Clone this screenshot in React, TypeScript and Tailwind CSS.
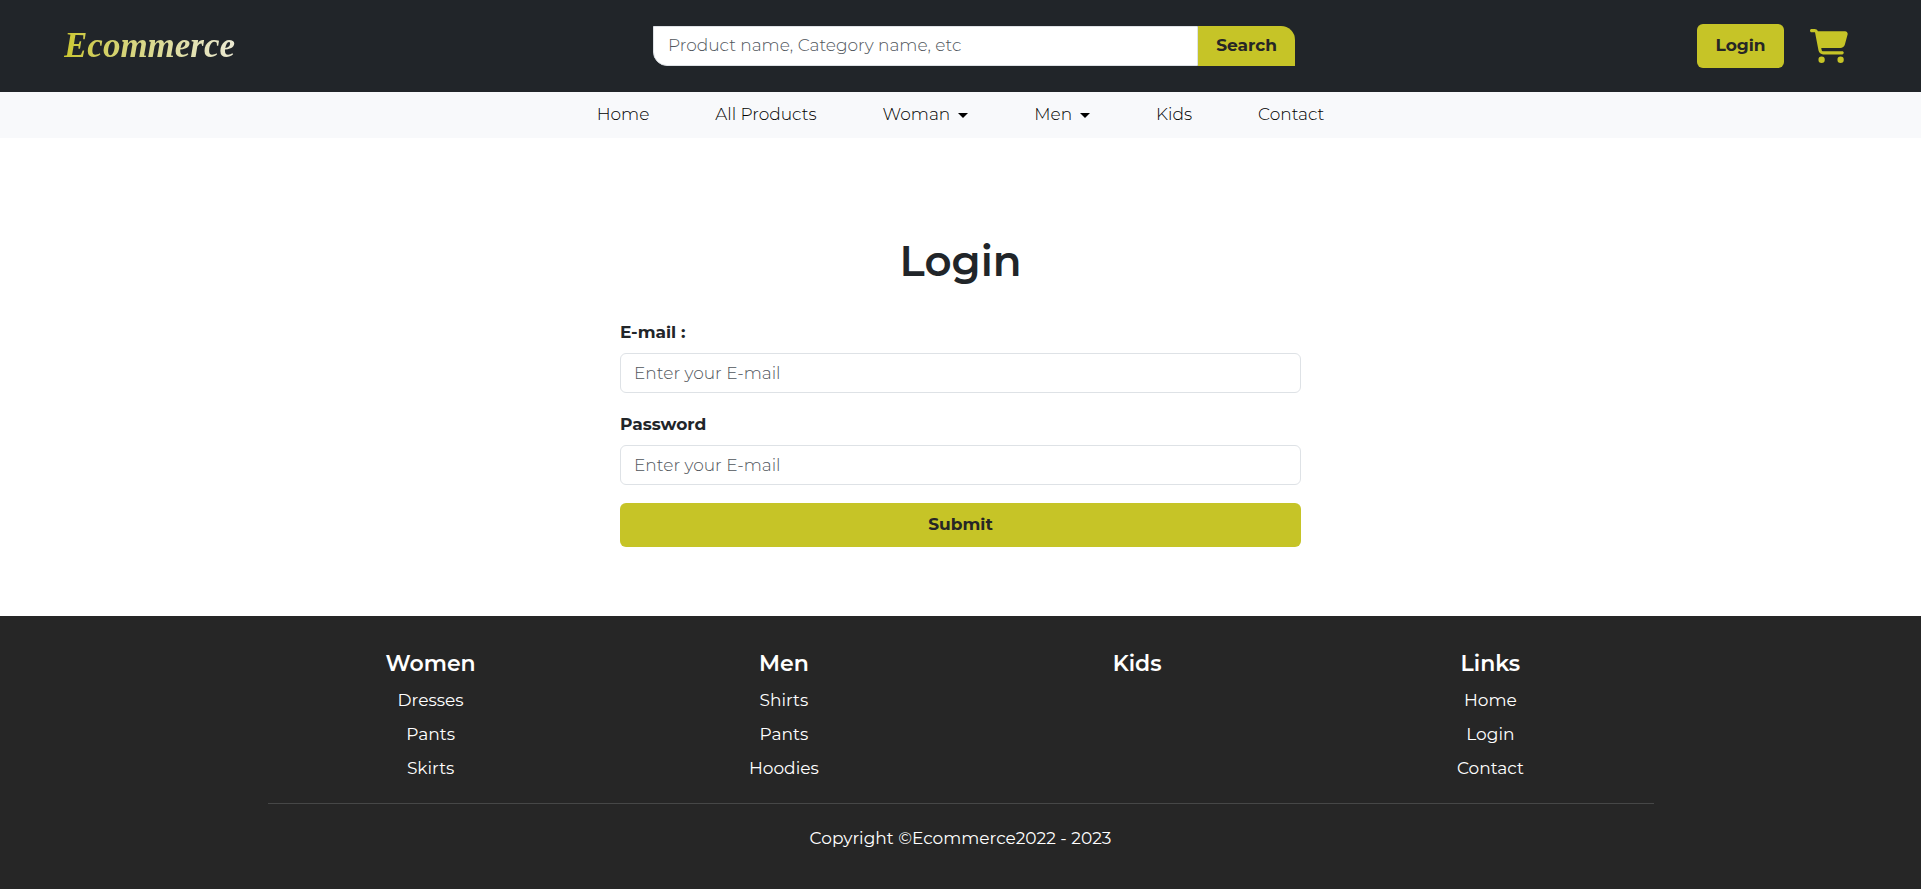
import { FaCartShopping } from "react-icons/fa6";

const navItems = [
  { label: "Home" },
  { label: "All Products" },
  { label: "Woman", menu: true },
  { label: "Men", menu: true },
  { label: "Kids" },
  { label: "Contact" },
];

const footerColumns = [
  { title: "Women", links: ["Dresses", "Pants", "Skirts"] },
  { title: "Men", links: ["Shirts", "Pants", "Hoodies"] },
  { title: "Kids", links: [] },
  { title: "Links", links: ["Home", "Login", "Contact"] },
];

function Header() {
  return (
    <header className="flex h-[92px] items-center justify-between bg-[#212529] pl-16 pr-[73px]">
      <a
        href="#"
        className="mr-4 bg-gradient-to-r from-[#cbc72e] to-[#ebe9d2] bg-clip-text font-['Brush_Script_MT','Liberation_Serif',serif] text-[35px] font-bold italic leading-[44px] text-transparent"
      >
        Ecommerce
      </a>
      <form role="search" className="flex h-10 w-full max-w-[642px]">
        <input
          type="search"
          aria-label="Search products"
          placeholder="Product name, Category name, etc"
          className="min-w-0 flex-1 rounded-bl-[14px] border border-[#dee2e6] bg-white px-3.5 text-[17px] font-light text-[#212529] placeholder:text-[#50565c]"
        />
        <button type="button" className="w-[97px] rounded-tr-[14px] bg-[#c6c427] text-[17px] font-bold text-[#262626]">
          Search
        </button>
      </form>
      <div className="flex items-center gap-[26px]">
        <button type="button" className="h-11 w-[87px] rounded-md bg-[#c6c427] text-[17px] font-bold text-[#262626]">
          Login
        </button>
        <a href="#" aria-label="Cart" className="text-[#c6c427]">
          <FaCartShopping size={38} />
        </a>
      </div>
    </header>
  );
}

function Nav() {
  return (
    <nav className="flex h-[46px] items-center justify-center gap-[66px] bg-[#f8f9fb] text-[17px] font-light text-black">
      {navItems.map((item) => (
        <a key={item.label} href="#" className="flex items-center gap-2">
          {item.label}
          {item.menu && (
            <span className="border-x-[5px] border-t-[5px] border-x-transparent border-t-black" />
          )}
        </a>
      ))}
    </nav>
  );
}

function Field({ id, label, type }: { id: string; label: string; type: string }) {
  return (
    <div className="mb-[18px]">
      <label htmlFor={id} className="mb-2 block text-[17px] font-bold leading-[26px]">
        {label}
      </label>
      <input
        id={id}
        type={type}
        placeholder="Enter your E-mail"
        className="block h-10 w-full rounded-md border border-[#dee2e6] px-[13px] text-[17px] font-light placeholder:text-[#50565c]"
      />
    </div>
  );
}

export default function App() {
  return (
    <div className="flex min-h-screen flex-col bg-white font-[Montserrat,Inter,sans-serif] text-[#212529]">
      <Header />
      <Nav />
      <main className="flex justify-center pb-[69px] pt-[93px]">
        <form className="w-full max-w-[681px]">
          <h1 className="mb-7 text-center text-[42px] font-semibold leading-[60px]">Login</h1>
          <Field id="email" label="E-mail :" type="email" />
          <Field id="password" label="Password" type="password" />
          <button type="button" className="h-11 w-full rounded-md bg-[#c6c427] text-[17px] font-bold text-[#262626]">
            Submit
          </button>
        </form>
      </main>
      <footer className="flex-1 bg-[#262626] px-4 pt-[34px] text-center text-white">
        <div className="mx-auto grid max-w-[1413px] grid-cols-4">
          {footerColumns.map((column) => (
            <div key={column.title}>
              <h2 className="mb-[9px] text-[22px] font-semibold leading-7">{column.title}</h2>
              <ul className="text-[17px] leading-[26px]">
                {column.links.map((link) => (
                  <li key={link} className="mb-2">
                    <a href="#">{link}</a>
                  </li>
                ))}
              </ul>
            </div>
          ))}
        </div>
        <hr className="mx-auto mb-[21px] mt-[14px] max-w-[1386px] border-[#464747]" />
        <p className="text-[17px] leading-[26px]">Copyright ©Ecommerce2022 - 2023</p>
      </footer>
    </div>
  );
}
